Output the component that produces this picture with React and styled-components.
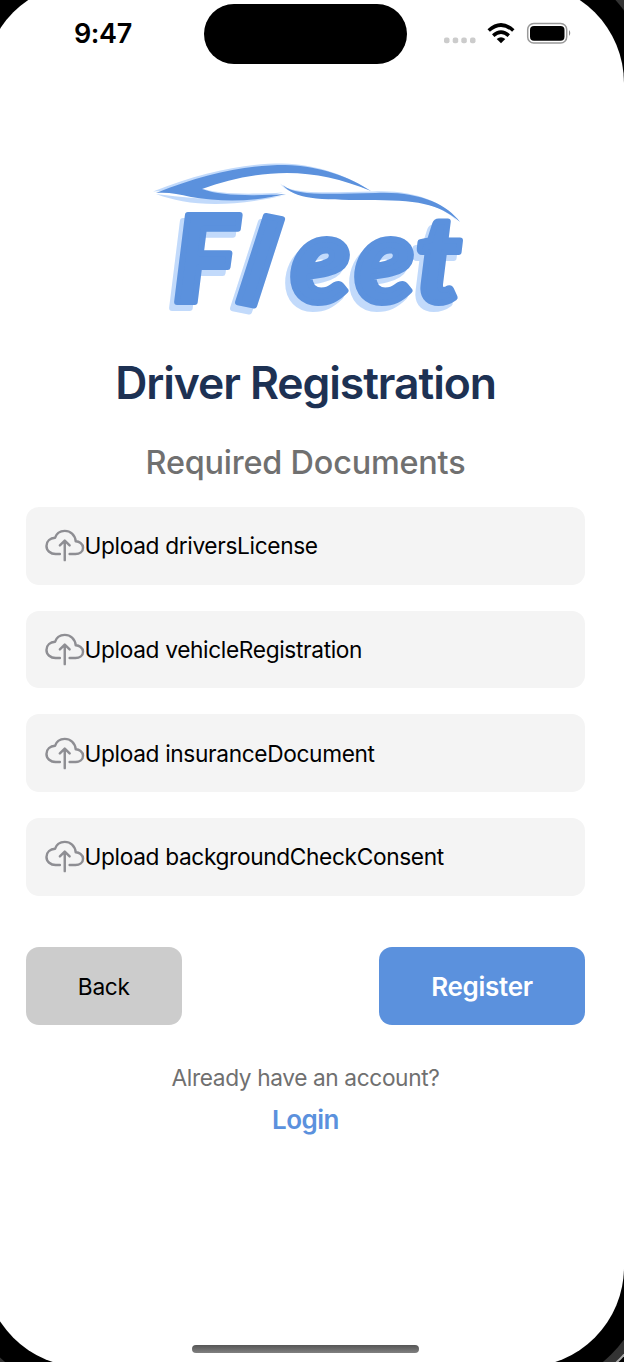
import React from "react";
import styled, { createGlobalStyle } from "styled-components";
import { IoCloudUploadOutline } from "react-icons/io5";

const GlobalStyle = createGlobalStyle`
  * { box-sizing: border-box; }
  body { margin: 0; background: #000; }
`;

const Device = styled.div`
  display: flex;
  width: 624px;
  height: 1362px;
  overflow: hidden;
  background: #000;
  font-family: Inter, "Liberation Sans", sans-serif;
`;

const Screen = styled.div`
  display: flex;
  flex-direction: column;
  flex: none;
  width: 640px;
  height: 1384px;
  margin: -17px 0 0 -16px;
  padding: 17px 0 0 16px;
  border-radius: 100px;
  background: #fff;
  box-shadow: 0 0 0 23.5px #000, 0 0 0 32px #333, 0 0 0 34px #aaa;
`;

const StatusBar = styled.header`
  display: grid;
  grid-template-columns: 204px 203px 1fr;
  height: 64px;
  padding-top: 4px;
`;

const Time = styled.time`
  padding-left: 74px;
  font-size: 27px;
  font-weight: 600;
  line-height: 60px;
  letter-spacing: -0.4px;
`;

const Island = styled.div`
  height: 60px;
  border-radius: 30px;
  background: #000;
`;

const StatusIcons = styled.div`
  padding-left: 36px;
  svg { display: block; }
`;

const Content = styled.main`
  display: flex;
  flex-direction: column;
  width: 559px;
  margin-left: 26px;
`;

const Logo = styled.svg`
  display: block;
  width: 350px;
  height: 190px;
  margin: 86px 0 0 114px;
  overflow: visible;
`;

const Wordmark = styled.text`
  fill: #5b91dd;
  stroke: #5b91dd;
  stroke-width: 6px;
  stroke-linejoin: round;
  font-family: Lato, sans-serif;
  font-size: 121px;
  font-weight: 900;
  font-style: italic;
  filter: drop-shadow(-5px 6px 0 #c2dafb);
`;

const Title = styled.h1`
  margin: 16px 0 0;
  color: #1d3153;
  font-size: 44.5px;
  font-weight: 600;
  line-height: 54px;
  letter-spacing: -1.08px;
  text-align: center;
  white-space: nowrap;
`;

const Subtitle = styled.h2`
  margin: 32px 0 23px;
  color: #707070;
  font-size: 32.4px;
  font-weight: 500;
  line-height: 42px;
  letter-spacing: -0.2px;
  text-align: center;
`;

const Uploads = styled.div`
  display: flex;
  flex-direction: column;
  gap: 26px;
`;

const UploadRow = styled.button`
  display: flex;
  align-items: center;
  height: 77.7px;
  padding: 0 19px;
  border: 0;
  border-radius: 13px;
  background: #f4f4f4;
  color: #000;
  font-family: inherit;
  font-size: 22.7px;
  letter-spacing: -0.35px;
  svg { flex: none; width: 39.5px; height: 39px; color: #8e8e93; }
`;

const Actions = styled.div`
  display: flex;
  justify-content: space-between;
  margin-top: 51.5px;
`;

const Button = styled.button`
  width: ${(p) => (p.$primary ? 206 : 155.5)}px;
  height: 77.7px;
  padding: 0;
  border: 0;
  border-radius: 13px;
  background: ${(p) => (p.$primary ? "#5b91dd" : "#ccc")};
  color: ${(p) => (p.$primary ? "#fff" : "#000")};
  font-family: inherit;
  font-size: ${(p) => (p.$primary ? 26 : 22.7)}px;
  font-weight: ${(p) => (p.$primary ? 600 : 400)};
  letter-spacing: -0.3px;
`;

const Prompt = styled.p`
  margin: 38px 0 0;
  color: #707070;
  font-size: 22.7px;
  line-height: 30px;
  letter-spacing: -0.38px;
  text-align: center;
`;

const Login = styled.a`
  margin-top: 10.5px;
  color: #5b91dd;
  font-size: 26px;
  font-weight: 600;
  line-height: 34px;
  letter-spacing: -0.5px;
  text-align: center;
`;

const HomeIndicator = styled.div`
  width: 227px;
  height: 8px;
  margin: auto 0 14px 192px;
  border-radius: 4px;
  background: linear-gradient(#555, #808080);
`;

const documents = ["driversLicense", "vehicleRegistration", "insuranceDocument", "backgroundCheckConsent"];

function CarLines() {
  return (
    <>
      <path d="M156 193C204 174 246 165 285 165C321 166 350 177 371 191C342 179 315 173 287 173C258 173 229 179 202 189C221 196 252 196 286 194C254 202 221 202 191 197C178 194 168 192 156 193Z" />
      <path d="M283 185C295 196 325 194 376 193C418 191 447 204 460 222C438 203 417 200 366 200C319 200 294 199 283 185Z" />
    </>
  );
}

function FleetLogo() {
  return (
    <Logo viewBox="140 150 350 190" aria-label="Fleet">
      <g fill="#c2dafb">
        <g transform="translate(-3 -1.500)"><CarLines /></g>
        <g transform="translate(0 1)">
          <path d="M156 193C185 204 225 208 286 194C250 200 205 200 156 193Z" />
        </g>
      </g>
      <g fill="#5b91dd"><CarLines /></g>
      <Wordmark x="173 236 291 355 416" y="302" rotate="0 11 0 0 0">Fleet</Wordmark>
    </Logo>
  );
}

function Indicators() {
  return (
    <svg width="132" height="60" viewBox="443 4 132 60">
      <g fill="#ccc">
        {[444, 452.7, 461.3, 470].map((x) => (
          <rect key={x} x={x} y="37.500" width="5.500" height="5.800" rx="2" />
        ))}
      </g>
      <g fill="none" stroke="#000" strokeWidth="3.600">
        <path d="M488.700 30.500Q501 19.500 513.300 30.500" />
        <path d="M493.200 35.600Q501 28.700 508.800 35.600" />
      </g>
      <path d="M496.700 39Q501 35.300 505.300 39L501 43.300Z" />
      <rect x="527.700" y="23.500" width="39" height="19.500" rx="6" fill="none" stroke="#999" strokeWidth="1.500" />
      <rect x="530" y="26" width="34.500" height="14.800" rx="4" />
      <path d="M569 30Q571.500 33 569 36Z" fill="#888" />
    </svg>
  );
}

export default function App() {
  return (
    <Device>
      <GlobalStyle />
      <Screen>
        <StatusBar>
          <Time>9:47</Time>
          <Island />
          <StatusIcons><Indicators /></StatusIcons>
        </StatusBar>
        <Content>
          <FleetLogo />
          <Title>Driver Registration</Title>
          <Subtitle>Required Documents</Subtitle>
          <Uploads>
            {documents.map((name) => (
              <UploadRow key={name}>
                <IoCloudUploadOutline />
                Upload {name}
              </UploadRow>
            ))}
          </Uploads>
          <Actions>
            <Button>Back</Button>
            <Button $primary>Register</Button>
          </Actions>
          <Prompt>Already have an account?</Prompt>
          <Login>Login</Login>
        </Content>
        <HomeIndicator />
      </Screen>
    </Device>
  );
}
